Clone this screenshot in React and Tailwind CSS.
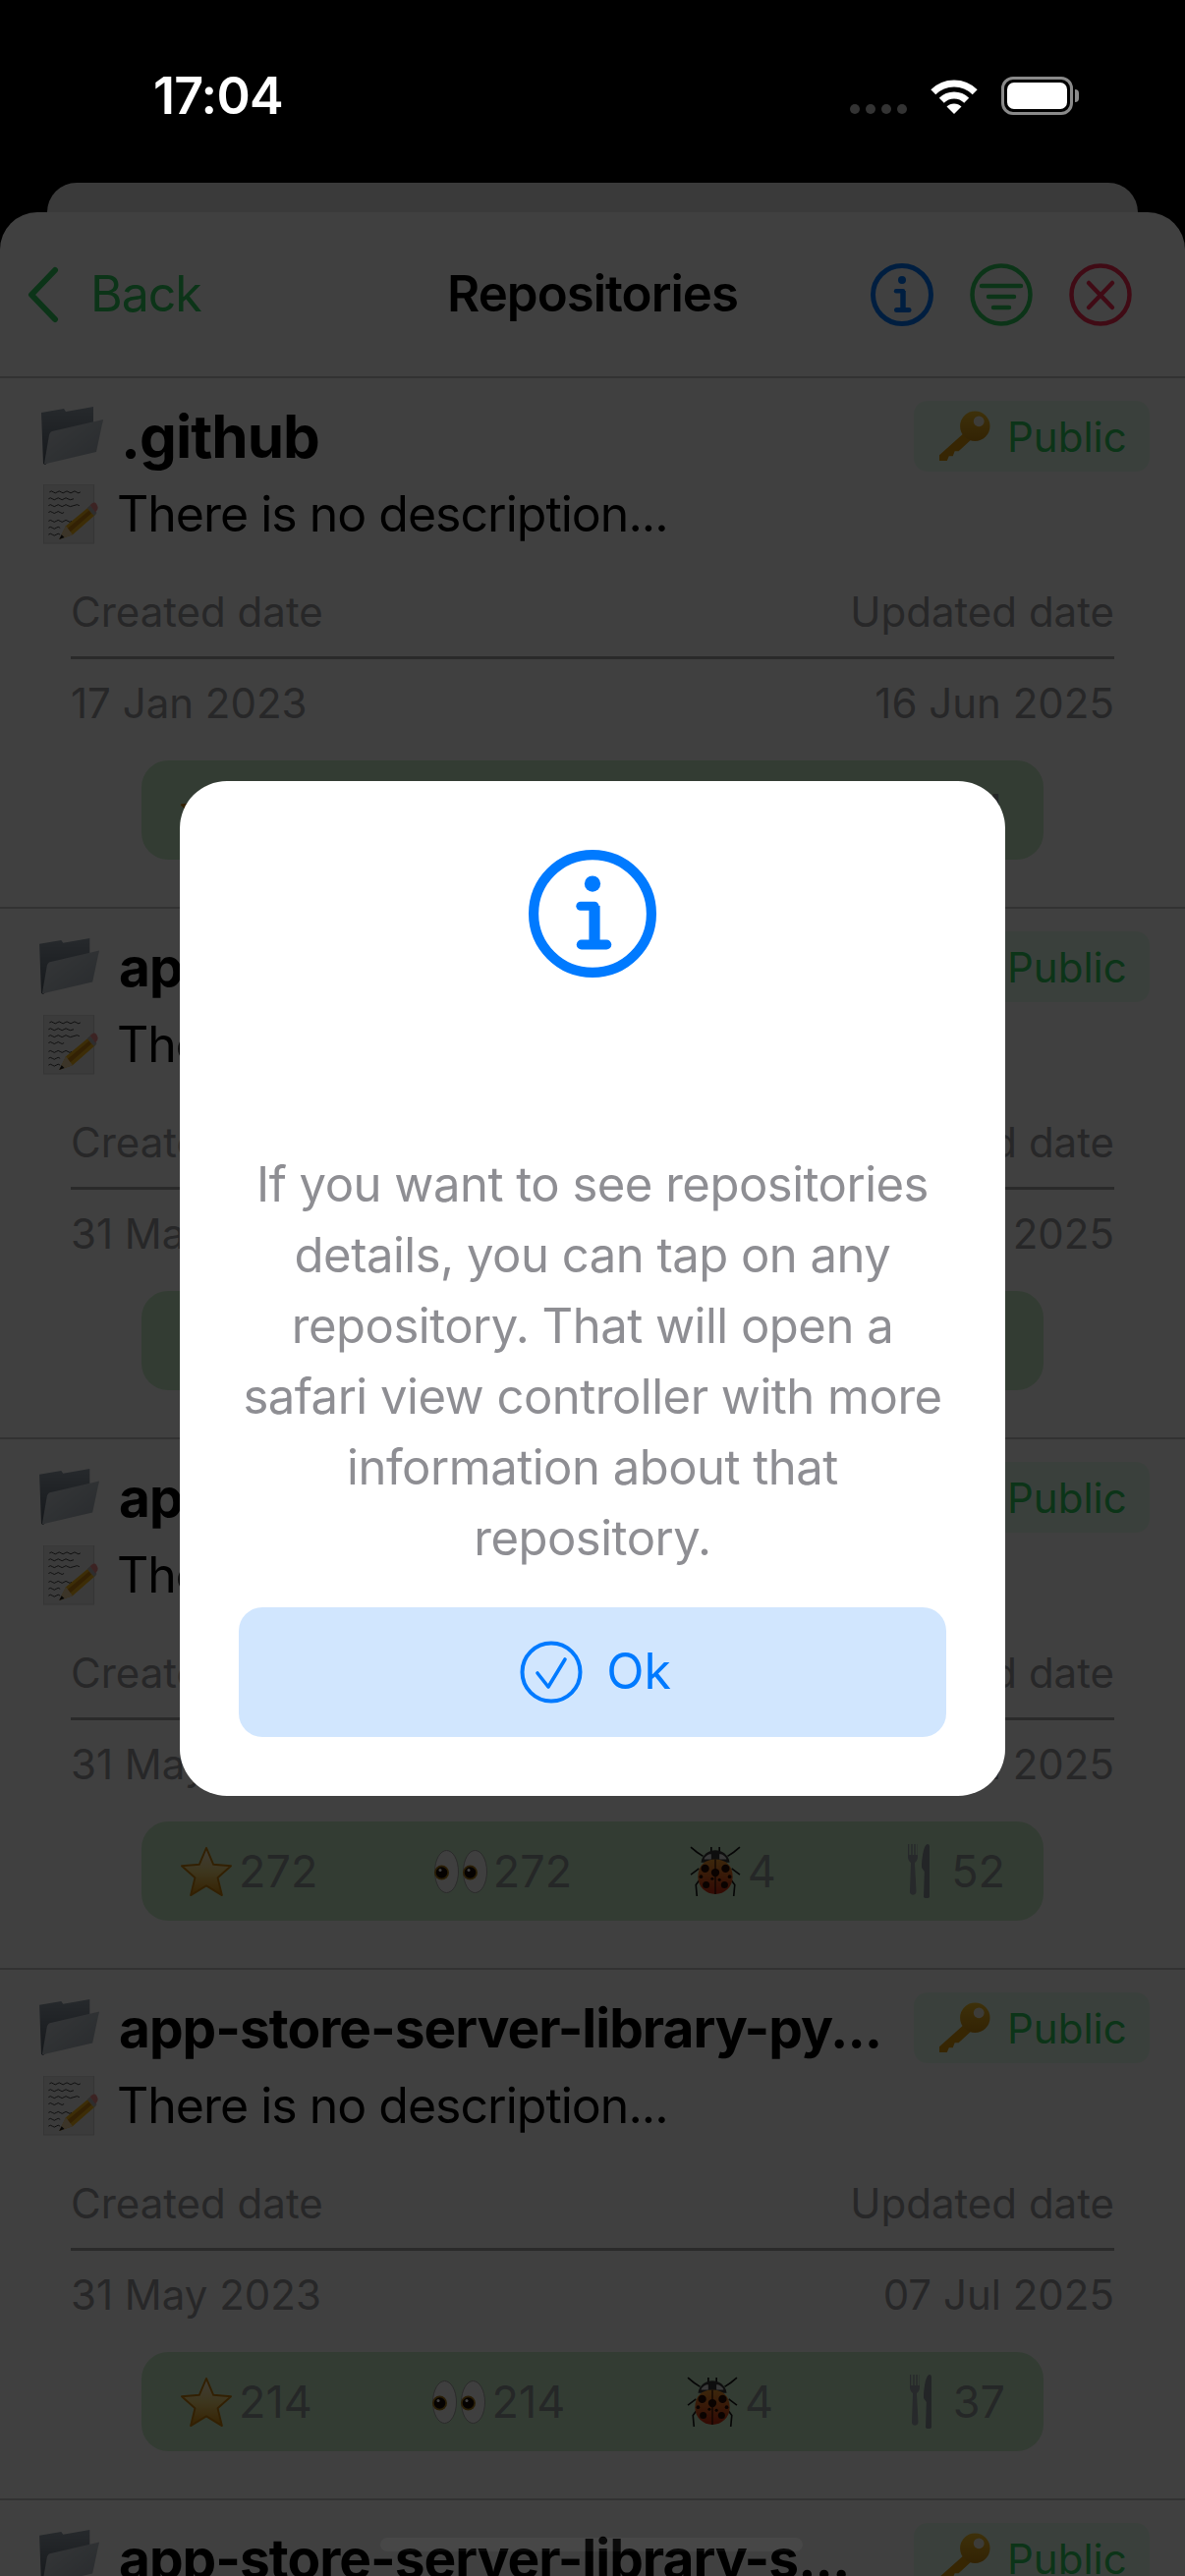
import React from "react";

const repos = [
  { name: ".github", created: "17 Jan 2023", updated: "16 Jun 2025", stats: [310, 310, 3, 44], first: true },
  { name: "app-store-server-library-ja...", created: "31 May 2023", updated: "10 Jul 2025", stats: [298, 298, 4, 61] },
  { name: "app-store-server-library-no...", created: "31 May 2023", updated: "07 Jul 2025", stats: [272, 272, 4, 52] },
  { name: "app-store-server-library-py...", created: "31 May 2023", updated: "07 Jul 2025", stats: [214, 214, 4, 37] },
  { name: "app-store-server-library-s...", created: "31 May 2023", updated: "07 Jul 2025", stats: [190, 190, 2, 30] },
];

function InfoIcon({ className }) {
  return (
    <svg viewBox="0 0 64 64" className={className} fill="none" stroke="currentColor">
      <circle cx="32" cy="32" r="29.5" strokeWidth="5" />
      <circle cx="32" cy="17" r="4" fill="currentColor" stroke="none" />
      <path d="M26 28.2h7" strokeWidth="4.4" strokeLinecap="round" />
      <path d="M33 28v19" strokeWidth="5.5" />
      <path d="M26.5 47.5h12.5" strokeWidth="5" strokeLinecap="round" />
    </svg>
  );
}

function FilterIcon({ className }) {
  return (
    <svg viewBox="0 0 64 64" className={className} fill="none" stroke="currentColor" strokeWidth="4.5" strokeLinecap="round">
      <circle cx="32" cy="32" r="29.5" />
      <path d="M12 23h40M19 34h26M24 45h16" />
    </svg>
  );
}

function CloseIcon({ className }) {
  return (
    <svg viewBox="0 0 64 64" className={className} fill="none" stroke="currentColor" strokeWidth="4.5" strokeLinecap="round">
      <circle cx="32" cy="32" r="29.5" />
      <path d="M20 20l24 25M44 20L20 45" />
    </svg>
  );
}

function CheckIcon({ className }) {
  return (
    <svg viewBox="0 0 64 64" className={className} fill="none" stroke="currentColor" strokeLinecap="round" strokeLinejoin="round">
      <circle cx="32" cy="32" r="29.5" strokeWidth="4" />
      <path d="M18 33l11 14L46 19" strokeWidth="3.6" />
    </svg>
  );
}

function FolderEmoji({ className }) {
  return (
    <svg viewBox="0 0 64 60" className={className}>
      <defs>
        <linearGradient id="folderBack" x1="0" y1="0" x2="0" y2="1">
          <stop offset="0" stopColor="#98a4b0" />
          <stop offset="1" stopColor="#56606c" />
        </linearGradient>
        <linearGradient id="folderFront" x1="0" y1="0" x2="1" y2="1">
          <stop offset="0" stopColor="#d4dae0" />
          <stop offset="1" stopColor="#a2acb6" />
        </linearGradient>
      </defs>
      <path d="M0 6l23-4 2 3 28-5v18L4 59 2 58z" fill="url(#folderBack)" />
      <path d="M11 25L63 13c0 2-1 4-1.500 7L56 46 5 58H3l5-29c.5-2 1.500-3.500 3-4z" fill="url(#folderFront)" />
    </svg>
  );
}

function MemoEmoji({ className }) {
  return (
    <svg viewBox="0 0 56 62" className={className}>
      <rect x="0" y="0" width="52" height="61" fill="#ececec" stroke="#d0d0d0" />
      <path
        d="M6 8q2-2 4 0t4 0 4 0 4 0 4 0 4 0 4 0 4 0M5 15q2-2 4 0t4 0 4 0 4 0 4 0 6 0M5 22q2-2 4 0t4 0 4 0 4 0 4 0 6 0 6 0M5 29q2-2 4 0t4 0 4 0 4 0M5 38q2-2 4 0t4 0 4 0 4 0 4 0 4 0M5 45q2-2 4 0t4 0 4 0M5 52q2-2 4 0t4 0 4 0"
        stroke="#2a2a2a"
        strokeWidth="0.9"
        fill="none"
      />
      <path d="M16 57l7-14 24-20 7 8-24 21z" fill="#f2b51e" />
      <path d="M23 47l24-20 2.500 3-24 21z" fill="#c98510" />
      <path d="M16 57l7-14 7 9z" fill="#efd2a2" />
      <path d="M16 57l2.500-5 3 3z" fill="#1c1c1c" />
      <path d="M45 24.500l3-3 7 8-3 3z" fill="#b8b8b8" />
      <path d="M48 21.500l1.500-1.500c2-1.500 4-1.500 5 0l1 2c1 2 .5 3.500-.5 5l-1.500 2z" fill="#f08a8a" />
    </svg>
  );
}

function KeyEmoji({ className }) {
  return (
    <svg viewBox="0 0 54 54" className={className}>
      <defs>
        <linearGradient id="keyGold" x1="0" y1="0" x2="0" y2="1">
          <stop offset="0" stopColor="#f6c22a" />
          <stop offset="1" stopColor="#c98a10" />
        </linearGradient>
      </defs>
      <path d="M28 22L1 46v6h8l2-5h4l2-5h4l13-12z" fill="#d9980f" />
      <circle cx="38" cy="16" r="15.500" fill="url(#keyGold)" />
      <circle cx="42" cy="11" r="5.500" fill="#f4f0e0" />
    </svg>
  );
}

function StarEmoji({ className }) {
  return (
    <svg viewBox="0 0 56 54" className={className}>
      <defs>
        <linearGradient id="starFill" x1="0" y1="0" x2="0" y2="1">
          <stop offset="0" stopColor="#f8f0d8" />
          <stop offset="0.5" stopColor="#f4d878" />
          <stop offset="1" stopColor="#d88a08" />
        </linearGradient>
      </defs>
      <path d="M28 2l7.500 17.500 18.500 1.500-14 12.500 4.500 18.500L28 42l-16.500 10 4.500-18.500L2 21l18.500-1.500z" fill="url(#starFill)" stroke="#c8800c" strokeWidth="2" strokeLinejoin="round" />
    </svg>
  );
}

function EyesEmoji({ className }) {
  return (
    <svg viewBox="0 0 54 44" className={className}>
      <ellipse cx="12.500" cy="22" rx="12" ry="21.500" fill="#fafafa" stroke="#a8a8a8" />
      <ellipse cx="41.500" cy="22" rx="12" ry="21.500" fill="#fafafa" stroke="#a8a8a8" />
      <circle cx="7.500" cy="23" r="7.500" fill="#a87a18" />
      <circle cx="7.500" cy="23" r="5.800" fill="#170b04" />
      <circle cx="36.500" cy="23" r="7.500" fill="#a87a18" />
      <circle cx="36.500" cy="23" r="5.800" fill="#170b04" />
      <circle cx="6" cy="20.500" r="1.500" fill="#fff" />
      <circle cx="35" cy="20.500" r="1.500" fill="#fff" />
    </svg>
  );
}

function BugEmoji({ className }) {
  return (
    <svg viewBox="0 0 50 50" className={className}>
      <defs>
        <linearGradient id="bugBody" x1="0" y1="0" x2="0" y2="1">
          <stop offset="0" stopColor="#f09a30" />
          <stop offset="1" stopColor="#c82810" />
        </linearGradient>
      </defs>
      <path d="M13 10L7 6 1 1M37 10l6-4 6-5M9 22l-8 6M41 22l8 6M9 34l-3 4 1 11M41 34l3 4-1 11M21 6V1M29 6V1" stroke="#181818" strokeWidth="1.600" fill="none" />
      <path d="M11 16c1-8 8-12 14-12s13 4 14 12z" fill="#3a3a3a" />
      <path d="M14 13c1-3 4-5 7-5v5zM36 13c-1-3-4-5-7-5v5z" fill="#e4e4e4" />
      <path d="M25 13c10 0 17 6 17 17 0 10-8 17-17 17S8 40 8 30c0-11 7-17 17-17z" fill="url(#bugBody)" />
      <path d="M25 13v34" stroke="#2a0d05" strokeWidth="1.200" />
      <g fill="#2a0d05">
        <circle cx="15" cy="22" r="4" />
        <circle cx="35" cy="22" r="4" />
        <circle cx="25" cy="26" r="4" />
        <circle cx="11" cy="30" r="1.800" />
        <circle cx="39" cy="30" r="1.800" />
        <circle cx="16" cy="38" r="3.400" />
        <circle cx="34" cy="38" r="3.400" />
        <circle cx="22" cy="32" r="1.500" />
        <circle cx="29" cy="33" r="1.500" />
      </g>
    </svg>
  );
}

function ForkEmoji({ className }) {
  return (
    <svg viewBox="0 0 22 55" className={className}>
      <path d="M0 0h1.300v11h2V0h1.400v11h1.600V0h1.400v11h1.900V0H10v13c0 3-1.500 5-3 6l1.500 29c.2 5-7 5-6.500 0L3 19c-1.500-1-3-3-3-6z" fill="#9aa2aa" />
      <path d="M20 0c1.500 0 2 1 2 3v51c-.5 1.500-5.500 1.500-6 0l.8-26L14 24c0-9 2-24 6-24z" fill="#8a929a" />
    </svg>
  );
}

function RepoRow({ repo }) {
  const icons = [StarEmoji, EyesEmoji, BugEmoji, null];
  return (
    <div className="flex h-[540px] shrink-0 flex-col border-b-2 border-[#c6c6c8]">
      <div className="mt-[23px] flex h-[72px] items-center pl-[40px] pr-[36px]">
        <FolderEmoji className={repo.first ? "ml-[2px] h-[60px] w-[64px] shrink-0" : "h-[58px] w-[62px] shrink-0"} />
        <div
          className={
            repo.first
              ? "ml-[17px] flex-1 truncate text-[60px] font-bold tracking-[-1px] text-black"
              : "ml-[19px] flex-1 truncate text-[55px] font-bold tracking-[-1px] text-black"
          }
        >
          {repo.name}
        </div>
        <div className="flex h-[72px] w-[240px] shrink-0 items-center rounded-[14px] bg-[#e8ffee] pl-[25px]">
          <KeyEmoji className="h-[53px] w-[53px]" />
          <span className="ml-[17px] text-[42px] text-[#30d060]">Public</span>
        </div>
      </div>
      <div className="mt-[13px] flex h-[61px] items-center pl-[44px]">
        <MemoEmoji className="h-[61px] w-[56px] shrink-0" />
        <span className="ml-[19px] text-[50px] tracking-[-1px] text-black">There is no description...</span>
      </div>
      <div className="mt-[43px] flex h-[50px] items-center justify-between px-[72px] text-[42px] text-[#9c9ca0]">
        <span>Created date</span>
        <span>Updated date</span>
      </div>
      <div className="mx-[72px] mt-[21px] h-[3px] bg-[#a8a8a8]" />
      <div className="mt-[19px] flex h-[50px] items-center justify-between px-[72px] text-[42px] text-[#9c9ca0]">
        <span>{repo.created}</span>
        <span>{repo.updated}</span>
      </div>
      <div className="mx-[144px] mt-[34px] flex h-[101px] items-center justify-between rounded-[27px] bg-[#ccf0cc] px-[39px] text-[45px] text-[#949a9c]">
        {repo.stats.map((value, i) => {
          const Icon = icons[i];
          return (
            <div key={i} className="flex items-center gap-[6px]">
              {Icon ? (
                <Icon className="h-[52px] w-[54px]" />
              ) : (
                <div className="flex w-[54px] justify-center">
                  <ForkEmoji className="h-[55px] w-[22px]" />
                </div>
              )}
              <span>{value}</span>
            </div>
          );
        })}
      </div>
    </div>
  );
}

export default function App() {
  return (
    <div className="relative flex h-[2622px] w-[1206px] flex-col overflow-hidden bg-black font-['Inter',sans-serif]">
      {/* status bar stays above the dimming */}
      <div className="relative z-10 flex h-[186px] shrink-0 items-start text-white">
        <span className="ml-[156px] mt-[68px] text-[52px] font-semibold leading-[60px] tracking-[-0.8px]">17:04</span>
        <div className="ml-auto mr-[108px] mt-[78px] flex items-end">
          <div className="mb-[1px] flex gap-[6px]">
            <span className="h-[10px] w-[10px] rounded-full bg-[#333333]" />
            <span className="h-[10px] w-[10px] rounded-full bg-[#333333]" />
            <span className="h-[10px] w-[10px] rounded-full bg-[#333333]" />
            <span className="h-[10px] w-[10px] rounded-full bg-[#333333]" />
          </div>
          <svg viewBox="0 0 50 38" className="ml-[23px] h-[38px] w-[50px]" fill="none" stroke="white" strokeWidth="7">
            <path d="M3.800 14.800A30 30 0 0 1 46.200 14.800" />
            <path d="M12.300 23.300A18 18 0 0 1 37.700 23.300" />
            <path d="M25 37L17.500 29.500A10.600 10.600 0 0 1 32.500 29.500Z" fill="white" stroke="none" />
          </svg>
          <div className="ml-[23px] flex items-center">
            <div className="h-[39px] w-[73px] rounded-[12px] border-[3px] border-[#8a8a8a] p-[3px]">
              <div className="h-full w-full rounded-[7px] bg-white" />
            </div>
            <div className="ml-[2px] h-[13px] w-[4px] rounded-r-full bg-[#8a8a8a]" />
          </div>
        </div>
      </div>

      <div className="mx-[48px] h-[30px] shrink-0 rounded-t-[30px] bg-[#e8e8e8]" />

      <div className="flex min-h-0 flex-1 flex-col overflow-hidden rounded-t-[38px] bg-white">
        <div className="grid h-[169px] shrink-0 grid-cols-[1fr_auto_1fr] items-center border-b-2 border-[#c6c6c8] pl-[27px] pr-[54px]">
          <div className="flex items-center">
            <svg viewBox="0 0 34 58" className="h-[58px] w-[34px] text-[#30d060]" fill="none" stroke="currentColor" strokeWidth="6" strokeLinecap="round" strokeLinejoin="round">
              <path d="M29 4L5 29l24 25" />
            </svg>
            <span className="ml-[31px] text-[50px] tracking-[-1px] text-[#30d060]">Back</span>
          </div>
          <span className="pl-[27px] text-[51px] font-semibold tracking-[-1px] text-black">Repositories</span>
          <div className="flex justify-end gap-[37px]">
            <InfoIcon className="h-[64px] w-[64px] text-[#007aff]" />
            <FilterIcon className="h-[64px] w-[64px] text-[#30d060]" />
            <CloseIcon className="h-[64px] w-[64px] text-[#ff2d55]" />
          </div>
        </div>
        {repos.map((repo) => (
          <RepoRow key={repo.name} repo={repo} />
        ))}
      </div>

      {/* dimming and alert */}
      <div className="absolute inset-0 flex items-center justify-center bg-black/75">
        <div className="flex h-[1033px] w-[840px] flex-col items-center rounded-[48px] bg-white px-[60px] pb-[60px] pt-[70px]">
          <InfoIcon className="h-[130px] w-[130px] text-[#007aff]" />
          <p className="mt-[175px] text-center text-[49px] leading-[72px] tracking-[-0.5px] text-[#8e8e93]">
            If you want to see repositories details, you can tap on any repository. That will open a safari view controller with more information about that repository.
          </p>
          <button className="mt-auto flex h-[132px] w-full items-center justify-center gap-[24px] rounded-[24px] bg-[#d1e6fe] pl-[6px] text-[50px] text-[#007aff]">
            <CheckIcon className="h-[64px] w-[64px]" />
            <span>Ok</span>
          </button>
        </div>
      </div>
      <div className="absolute bottom-[25px] left-[387px] h-[14px] w-[430px] rounded-full bg-white/[0.04]" />
    </div>
  );
}
